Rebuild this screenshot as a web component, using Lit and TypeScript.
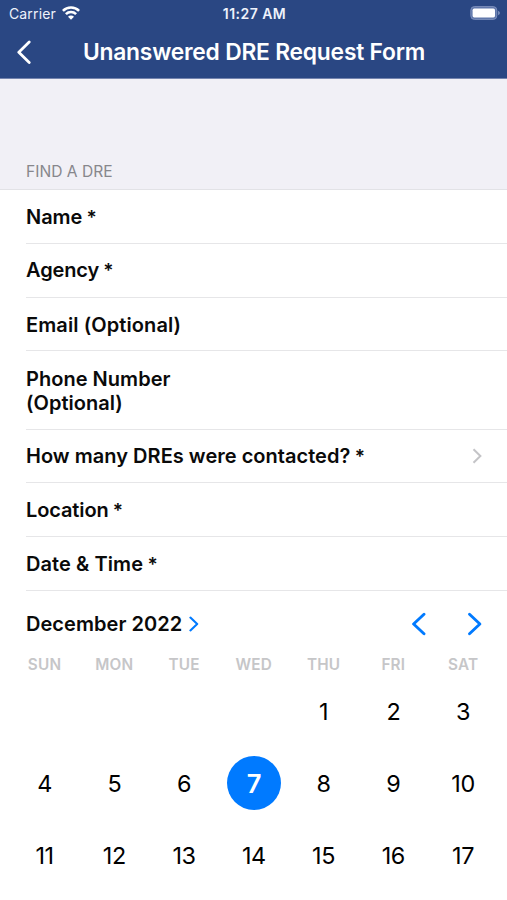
import { LitElement, html, css } from "lit";
import { customElement, property } from "lit/decorators.js";
import { classMap } from "lit/directives/class-map.js";

interface Field {
  key: string;
  label: string;
  required?: boolean;
  link?: boolean;
}

const FIELDS: Field[] = [
  { key: "name", label: "Name", required: true },
  { key: "agency", label: "Agency", required: true },
  { key: "email", label: "Email (Optional)" },
  { key: "phone", label: "Phone Number (Optional)" },
  { key: "count", label: "How many DREs were contacted?", required: true, link: true },
  { key: "location", label: "Location", required: true },
  { key: "date", label: "Date & Time", required: true },
];

const WEEKDAYS = ["SUN", "MON", "TUE", "WED", "THU", "FRI", "SAT"];

@customElement("status-bar")
class StatusBar extends LitElement {
  static styles = css`
    :host {
      display: grid;
      grid-template-columns: 1fr auto 1fr;
      align-items: center;
      height: 27px;
      padding: 0 7px 0 9px;
      font-size: 14px;
      color: #eef2fb;
    }
    .carrier {
      display: flex;
      align-items: center;
      gap: 6px;
      letter-spacing: 0.14px;
    }
    .time {
      font-weight: 600;
      font-size: 14px;
      letter-spacing: 0.46px;
    }
    .battery {
      justify-self: end;
      margin-top: -1px;
    }
    svg {
      display: block;
    }
    .wifi {
      margin-top: -1px;
    }
  `;
  render() {
    return html`
      <div class="carrier">
        <span>Carrier</span>
        <svg class="wifi" width="18" height="14" viewBox="0 0 18 14" fill="none" stroke="#fff" stroke-width="2.6">
          <path d="M0.9 4.9A11.4 11.4 0 0 1 17.1 4.9" />
          <path d="M3.9 8.1A7.3 7.3 0 0 1 14.1 8.1" />
          <path d="M9 13.8L6 10.8A4.2 4.2 0 0 1 12 10.8Z" fill="#fff" stroke="none" />
        </svg>
      </div>
      <div class="time">11:27 AM</div>
      <svg class="battery" width="30" height="14" viewBox="0 0 30 14">
        <rect x="0.8" y="0.6" width="26" height="12.8" rx="3.6" fill="#5f76aa" stroke="#8194c0" stroke-width="0.9" />
        <rect x="2.6" y="2.6" width="22.4" height="8.8" rx="1.6" fill="#fff" />
        <path d="M28.2 4.8Q29.8 5.8 29.8 7T28.2 9.2Z" fill="#8b9bc4" />
      </svg>
    `;
  }
}

@customElement("nav-header")
class NavHeader extends LitElement {
  @property() heading = "";
  static styles = css`
    :host {
      display: grid;
      grid-template-columns: 48px 1fr 48px;
      align-items: center;
      height: 51px;
      color: #fff;
    }
    .back {
      display: block;
      margin: -1px 0 0 16px;
    }
    .title {
      text-align: center;
      white-space: nowrap;
      font-size: 22.8px;
      line-height: 28px;
      font-weight: 600;
      margin: -2px 0 0 1px;
      letter-spacing: -0.21px;
    }
  `;
  render() {
    return html`
      <svg class="back" width="16" height="24" viewBox="0 0 16 24" fill="none" stroke="#fff" stroke-width="2.8" stroke-linecap="round" stroke-linejoin="round">
        <path d="M13.2 2L2.8 12.2L13.2 22.4" />
      </svg>
      <div class="title">${this.heading}</div>
    `;
  }
}

@customElement("form-row")
class FormRow extends LitElement {
  @property() label = "";
  @property() key = "";
  @property({ type: Boolean }) required = false;
  @property({ type: Boolean }) link = false;
  static styles = css`
    :host {
      display: block;
      padding-left: 26px;
    }
    .row {
      box-sizing: border-box;
      display: flex;
      align-items: center;
      justify-content: space-between;
      min-height: 53.8px;
      padding: 2px 25px 0 0;
      border-bottom: 1px solid #e6e6e8;
    }
    .label {
      font-size: 20px;
      line-height: 24.4px;
      font-weight: 600;
      letter-spacing: 0.03px;
      white-space: nowrap;
    }
    .row.phone {
      min-height: 78.2px;
    }
    .row.phone .label {
      white-space: normal;
      width: 170px;
    }
    .agency .label { letter-spacing: -0.12px; }
    .name .label { letter-spacing: -0.05px; }
    .email .label { letter-spacing: 0.1px; }
    .location .label { letter-spacing: -0.12px; }
    .date .label { letter-spacing: 0.08px; }
    .star {
      display: inline-block;
      font-size: 19px;
      margin-left: -0.8px;
    }
    .chevron {
      display: block;
      margin-top: -1px;
    }
  `;
  render() {
    return html`
      <div class="row ${this.key}">
        <span class="label">${this.label}${this.required ? html` <span class="star">*</span>` : null}</span>
        ${this.link
          ? html`<svg class="chevron" width="10" height="16" viewBox="0 0 10 16" fill="none" stroke="#c4c4c7" stroke-width="2">
              <path d="M1.5 1.2L8.4 8L1.5 14.8" />
            </svg>`
          : null}
      </div>
    `;
  }
}

@customElement("month-calendar")
class MonthCalendar extends LitElement {
  @property({ type: Number }) selected = 7;
  static styles = css`
    :host { display: block; }
    .head {
      display: flex;
      align-items: center;
      height: 66px;
      padding: 0 25px 0 26px;
    }
    .month {
      font-size: 20px;
      font-weight: 600;
      letter-spacing: 0.05px;
      margin-right: 7px;
      padding-top: 1px;
    }
    .arrows {
      display: flex;
      gap: 41px;
      margin-left: auto;
    }
    svg {
      display: block;
      fill: none;
      stroke: #007aff;
      stroke-linecap: round;
      stroke-linejoin: round;
    }
    .grid {
      display: grid;
      grid-template-columns: repeat(7, 69.75px);
      margin-left: 9.7px;
      justify-items: center;
      align-items: center;
    }
    .weekdays {
      height: 18px;
      margin-top: -2px;
      color: #c6c6c8;
      font-size: 15.3px;
      font-weight: 600;
      letter-spacing: 0.2px;
    }
    .days {
      grid-auto-rows: 72.2px;
      margin-top: 2px;
      font-size: 23.4px;
      color: #000;
    }
    .day {
      display: flex;
      align-items: center;
      justify-content: center;
      width: 54px;
      height: 54px;
      border-radius: 50%;
      letter-spacing: -0.4px;
    }
    .day.selected {
      background: #007aff;
      color: #fff;
      font-weight: 600;
      font-size: 25.5px;
    }
  `;
  render() {
    const cells = [...Array(4).fill(0), ...Array.from({ length: 17 }, (_, i) => i + 1)];
    return html`
      <div class="head">
        <span class="month">December 2022</span>
        <svg width="10" height="16" viewBox="0 0 10 16" stroke-width="2.1">
          <path d="M1.4 1.6L8.2 8L1.4 14.4" />
        </svg>
        <div class="arrows">
          <svg width="15" height="24" viewBox="0 0 15 24" stroke-width="2.9">
            <path d="M13 2.3L2.6 12L13 21.7" />
          </svg>
          <svg width="15" height="24" viewBox="0 0 15 24" stroke-width="2.9">
            <path d="M2.5 2.3L12.9 12L2.5 21.7" />
          </svg>
        </div>
      </div>
      <div class="grid weekdays">${WEEKDAYS.map((d) => html`<span>${d}</span>`)}</div>
      <div class="grid days">
        ${cells.map((d) =>
          d
            ? html`<span class=${classMap({ day: true, selected: d === this.selected })}>${d}</span>`
            : html`<span></span>`
        )}
      </div>
    `;
  }
}

@customElement("app-root")
class AppRoot extends LitElement {
  static styles = css`
    :host {
      display: block;
      height: 900px;
      overflow: hidden;
      background: #fff;
      color: #0a0a0a;
      font-family: Inter, "Liberation Sans", sans-serif;
    }
    .top {
      background: #2a4783;
      border-bottom: 1px solid #7484ae;
    }
    .section {
      box-sizing: border-box;
      display: flex;
      align-items: flex-end;
      height: 111px;
      padding: 0 26px 7px;
      background: #f1f0f6;
      border-bottom: 1px solid #e2e2e6;
      color: #87878c;
      font-size: 15.6px;
      line-height: 20px;
    }
  `;
  render() {
    return html`
      <div class="top">
        <status-bar></status-bar>
        <nav-header heading="Unanswered DRE Request Form"></nav-header>
      </div>
      <div class="section"><span>FIND A DRE</span></div>
      ${FIELDS.map(
        (f) => html`<form-row .key=${f.key} .label=${f.label} .required=${!!f.required} .link=${!!f.link}></form-row>`
      )}
      <month-calendar></month-calendar>
    `;
  }
}
